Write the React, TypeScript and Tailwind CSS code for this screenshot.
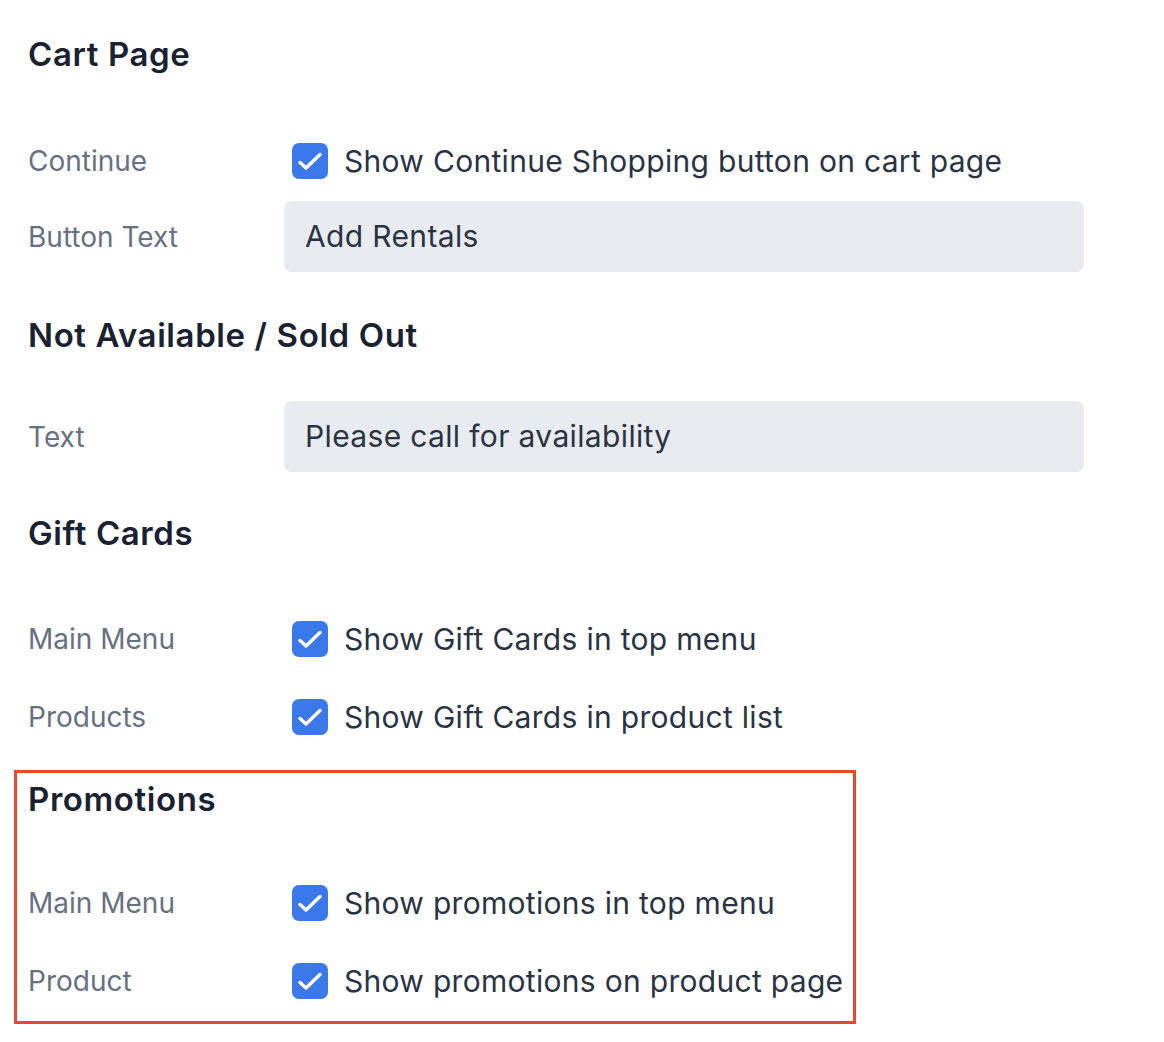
import React from "react";

const font = { fontFamily: "Inter, 'Noto Sans', sans-serif" };

function Check() {
  return (
    <div className="w-[36px] h-[36px] rounded-[7px] bg-[#3b78e9] flex items-center justify-center shrink-0 ml-[8px]">
      <svg width="36" height="36" viewBox="0 0 36 36" fill="none">
        <path d="M8 19.5L14 25L28 11.5" stroke="white" strokeWidth="3.4" strokeLinecap="round" strokeLinejoin="round" />
      </svg>
    </div>
  );
}

function Heading({ children, className = "" }: { children: React.ReactNode; className?: string }) {
  return (
    <div className={"h-[40px] flex items-center text-[33px] font-semibold text-[#1a2232] tracking-[0.6px] whitespace-nowrap " + className}>
      {children}
    </div>
  );
}

function CheckRow({ label, text, className = "" }: { label: string; text: string; className?: string }) {
  return (
    <div className={"h-[56px] flex items-center " + className}>
      <div className="w-[256px] shrink-0 text-[28px] text-[#687083]">{label}</div>
      <Check />
      <div className="ml-[16px] text-[30px] tracking-[0.3px] text-[#2a3344] whitespace-nowrap">{text}</div>
    </div>
  );
}

function InputRow({ label, value, className = "" }: { label: string; value: string; className?: string }) {
  return (
    <div className={"flex items-center " + className}>
      <div className="w-[256px] shrink-0 text-[28px] text-[#687083]">{label}</div>
      <div className="w-[800px] h-[71px] rounded-[8px] bg-[#e8ebef] flex items-center pl-[21px] text-[30px] tracking-[0.35px] text-[#2a3344]">
        {value}
      </div>
    </div>
  );
}

export default function App() {
  return (
    <div className="w-[1164px] h-[1042px] bg-white overflow-hidden px-[14px] pt-[35px]" style={font}>
      <div className="px-[14px]">
        <Heading>Cart Page</Heading>
        <CheckRow className="mt-[58px]" label="Continue" text="Show Continue Shopping button on cart page" />
        <InputRow className="mt-[12px]" label="Button Text" value="Add Rentals" />
        <Heading className="mt-[44px]">Not Available / Sold Out</Heading>
        <InputRow className="mt-[45px]" label="Text" value="Please call for availability" />
        <Heading className="mt-[42px]">Gift Cards</Heading>
        <CheckRow className="mt-[57px]" label="Main Menu" text="Show Gift Cards in top menu" />
        <CheckRow className="mt-[22px]" label="Products" text="Show Gift Cards in product list" />
      </div>
      <div className="mt-[25px] w-[842px] border-[3px] border-[#e8482c] px-[11px] pt-[7px] pb-[12px]">
        <Heading>Promotions</Heading>
        <CheckRow className="mt-[55px]" label="Main Menu" text="Show promotions in top menu" />
        <CheckRow className="mt-[22px]" label="Product" text="Show promotions on product page" />
      </div>
    </div>
  );
}
